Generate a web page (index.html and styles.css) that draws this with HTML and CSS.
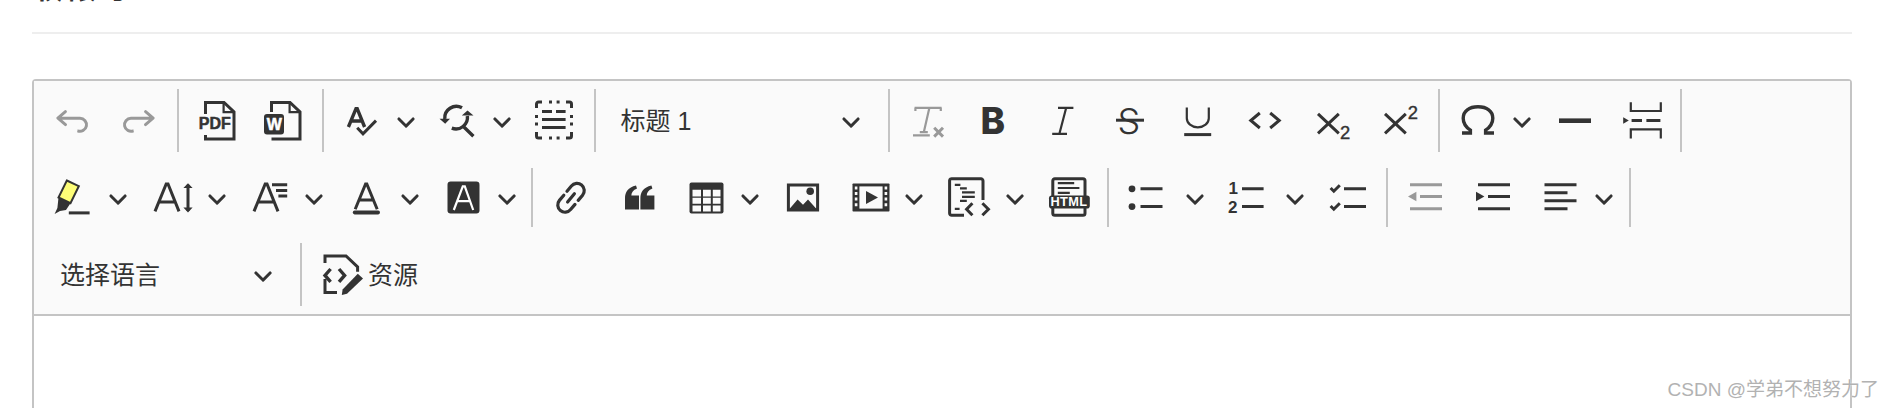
FILE: index.html
```html
<!DOCTYPE html>
<html lang="zh-CN">
<head>
    <meta charset="UTF-8">
    <title>编辑器</title>
    <link rel="stylesheet" href="styles.css">
</head>
<body>
    <div class="doc-title">权限号</div>
    <div class="divider"></div>

    <div class="editor">
        <div class="toolbar">
            <!-- row 1 -->
            <div class="row">
                <div class="btn off"><svg class="icon" viewBox="0 0 20 20"><path d="M5.042 9.367l2.189 1.837a.75.75 0 0 1-.965 1.149l-3.788-3.18a.747.747 0 0 1-.21-.284.75.75 0 0 1 .17-.945L6.23 4.762a.75.75 0 1 1 .964 1.15L4.863 7.866h8.917A.75.75 0 0 1 14 7.9a4 4 0 1 1-1.477 7.718l.344-1.489a2.5 2.5 0 1 0 1.094-4.73l.008-.032H5.042z"/></svg></div>
                <div class="btn off"><svg class="icon" viewBox="0 0 20 20"><path d="M14.958 9.367l-2.189 1.837a.75.75 0 0 0 .965 1.149l3.788-3.18a.747.747 0 0 0 .21-.284.75.75 0 0 0-.17-.945L13.77 4.762a.75.75 0 1 0-.964 1.15l2.331 1.955H6.22A.75.75 0 0 0 6 7.9a4 4 0 1 0 1.477 7.718l-.344-1.489A2.5 2.5 0 1 1 6.039 9.4l-.008-.032h8.927z"/></svg></div>
                <span class="sep"></span>
                <div class="btn btn-file"><svg class="icon" viewBox="0 0 20 20"><path class="ln" d="M3.75 6.5V.75H13L18 5.5V19H3.75V17"/><path class="ln thin" d="M12.8 1V5.6H18"/><text class="t-file" x="0.4" y="14.2">PDF</text></svg></div>
                <div class="btn btn-file"><svg class="icon" viewBox="0 0 20 20"><path class="ln" d="M3.75 5.5V.75H13L18 5.5V19H3.75"/><path class="ln thin" d="M12.8 1V5.6H18"/><rect x="0" y="6.5" width="10" height="10.25" rx="1.5"/><text class="t-file t-white" x="1.4" y="14.3">W</text></svg></div>
                <span class="sep"></span>
                <div class="btn drop"><svg class="icon" viewBox="0 0 20 20"><path class="ln bold" d="M3.2 13 7 3.8h.6L11.3 13M4.6 10h5.4"/><path class="ln" d="M7.6 13.4 10.5 16.4 17 9.8"/></svg><svg class="chev" viewBox="0 0 10 10"><path d="M.941 4.523a.75.75 0 1 1 1.06-1.06l3.006 3.005 3.005-3.005a.75.75 0 1 1 1.06 1.06l-3.549 3.55a.75.75 0 0 1-1.168-.136L.941 4.523z"/></svg></div>
                <div class="btn drop"><svg class="icon" viewBox="0 0 20 20"><path class="ln bold" d="M3.4 9A5.8 5.8 0 0 1 12 3.4M14.7 7.5A5.8 5.8 0 0 1 6.9 13.6M12.7 12.8 17.7 17.6"/><path d="M.75 8.9H6L3.6 11.4zM11.9 7.25h5.85L14.75 4.75z"/></svg><svg class="chev" viewBox="0 0 10 10"><path d="M.941 4.523a.75.75 0 1 1 1.06-1.06l3.006 3.005 3.005-3.005a.75.75 0 1 1 1.06 1.06l-3.549 3.55a.75.75 0 0 1-1.168-.136L.941 4.523z"/></svg></div>
                <div class="btn"><svg class="icon" viewBox="0 0 20 20"><path class="ln" d="M.75 3.5V1.5a1 1 0 0 1 1-1H3.5M15.5.5h1.75a1 1 0 0 1 1 1V3.5M18.25 15.5v2a1 1 0 0 1-1 1H15.5M3.5 18.5H1.75a1 1 0 0 1-1-1V15.5M7 .5h1.5M10.8.5h1.5M7 18.5h1.5M10.8 18.5h1.5M.75 7v1.5M.75 10.8v1.5M18.25 7v1.5M18.25 10.8v1.5M3.5 5.25h5M10.5 5.25h4.8M3.5 9.25h11.8M3.5 13.25h11.8"/></svg></div>
                <span class="sep"></span>
                <div class="select heading-select"><span>标题 1</span><svg class="chev" viewBox="0 0 10 10"><path d="M.941 4.523a.75.75 0 1 1 1.06-1.06l3.006 3.005 3.005-3.005a.75.75 0 1 1 1.06 1.06l-3.549 3.55a.75.75 0 0 1-1.168-.136L.941 4.523z"/></svg></div>
                <span class="sep"></span>
                <div class="btn btn-mark off"><svg class="icon" viewBox="0 0 20 20"><path class="ln thin" d="M2.8 3.4H16.3M3.2 3.4V5M15.9 3.4V5M10.2 3.4 7.4 15.6M5.4 15.6H9.4M2 17.2H10.4"/><path class="ln" d="M12.6 13.4l4.4 4.4M17 13.4l-4.4 4.4"/></svg></div>
                <div class="btn btn-mark"><svg class="icon" viewBox="0 0 20 20"><text class="t-bold" x="2.2" y="16.4">B</text></svg></div>
                <div class="btn btn-mark"><svg class="icon" viewBox="0 0 20 20"><path class="ln thin" d="M7.5 3.4H15.2M4.6 16.4H12M11.6 3.4 8.2 16.4"/></svg></div>
                <div class="btn btn-mark"><svg class="icon" viewBox="0 0 20 20"><text class="t-light" x="3.8" y="16.3">S</text><path class="ln" d="M3 9.6h14"/></svg></div>
                <div class="btn btn-mark"><svg class="icon" viewBox="0 0 20 20"><path class="ln thin" d="M4.9 3.2V8.6a5.5 4.6 0 0 0 11 0V3.2"/><path class="ln" d="M3.6 16.8H17.1"/></svg></div>
                <div class="btn btn-mark"><svg class="icon" viewBox="0 0 20 20"><path class="ln" d="M7.4 6 2.9 9.75l4.5 3.75M12.6 6l4.5 3.75-4.5 3.75"/></svg></div>
                <div class="btn btn-mark"><svg class="icon" viewBox="0 0 20 20"><path class="ln" d="M3 6.4 13.4 16.2M13.4 6.4 3 16.2"/><text class="t-small" x="14" y="18.8">2</text></svg></div>
                <div class="btn btn-mark"><svg class="icon" viewBox="0 0 20 20"><path class="ln" d="M3 6.4 13.4 16.2M13.4 6.4 3 16.2"/><text class="t-small" x="14.4" y="9.2">2</text></svg></div>
                <span class="sep"></span>
                <div class="btn drop"><svg class="icon" viewBox="0 0 20 20"><path class="ln bold" d="M2 16h4.2v-1.4C3.9 13 2.6 11 2.6 8.6 2.6 5 5.6 2.9 10 2.9s7.4 2.1 7.4 5.7c0 2.4-1.3 4.4-3.6 6V16H18"/></svg><svg class="chev" viewBox="0 0 10 10"><path d="M.941 4.523a.75.75 0 1 1 1.06-1.06l3.006 3.005 3.005-3.005a.75.75 0 1 1 1.06 1.06l-3.549 3.55a.75.75 0 0 1-1.168-.136L.941 4.523z"/></svg></div>
                <div class="btn"><svg class="icon" viewBox="0 0 20 20"><rect x="2" y="8.7" width="16" height="2.3"/></svg></div>
                <div class="btn"><svg class="icon" viewBox="0 0 20 20"><path class="ln thin" d="M4.4 .6V5H19.4V.6M4.4 18.8V14.2H19.4V18.8"/><path class="ln" d="M4.8 9.75H10M12.2 9.75H19.2"/><path d="M.6 8.1 3.4 9.75.6 11.4z"/></svg></div>
                <span class="sep"></span>
            </div>

            <!-- row 2 -->
            <div class="row row-mid">
                <div class="btn drop drop-wide"><svg class="icon" viewBox="0 0 20 20"><path class="hl" d="M7.9 1.25 13.9 4.1 9.75 12.6 3.75 9.75z"/><path d="M3.75 9.75 9.75 12.6 7.5 16 4.5 16.5 1.8 18 3.2 15z"/><rect x="8.9" y="16.7" width="10.4" height="1.5"/></svg><svg class="chev" viewBox="0 0 10 10"><path d="M.941 4.523a.75.75 0 1 1 1.06-1.06l3.006 3.005 3.005-3.005a.75.75 0 1 1 1.06 1.06l-3.549 3.55a.75.75 0 0 1-1.168-.136L.941 4.523z"/></svg></div>
                <div class="btn drop"><svg class="icon" viewBox="0 0 20 20"><path class="ln" d="M1 16.7 6.6 3h.9L13 16.7M2.8 12h8.5"/><path class="ln" d="M17.5 3.4V16.4"/><path d="M15.2 5 17.5 2.6 19.8 5zM15.2 14.8 17.5 17.2 19.8 14.8z"/></svg><svg class="chev" viewBox="0 0 10 10"><path d="M.941 4.523a.75.75 0 1 1 1.06-1.06l3.006 3.005 3.005-3.005a.75.75 0 1 1 1.06 1.06l-3.549 3.55a.75.75 0 0 1-1.168-.136L.941 4.523z"/></svg></div>
                <div class="btn drop"><svg class="icon" viewBox="0 0 20 20"><path class="ln" d="M2 16.7 7.6 3h.9L14 16.7M3.8 12h8.5M11 3.4h7.6M13 6.2h5.6M14.2 9h4.4"/></svg><svg class="chev" viewBox="0 0 10 10"><path d="M.941 4.523a.75.75 0 1 1 1.06-1.06l3.006 3.005 3.005-3.005a.75.75 0 1 1 1.06 1.06l-3.549 3.55a.75.75 0 0 1-1.168-.136L.941 4.523z"/></svg></div>
                <div class="btn drop"><svg class="icon" viewBox="0 0 20 20"><path class="ln" d="M4.6 15.6 9.8 3h.6L15.6 15.6M6.3 11h7.6"/><rect x="3.4" y="16.3" width="13.6" height="1.9" rx=".9"/></svg><svg class="chev" viewBox="0 0 10 10"><path d="M.941 4.523a.75.75 0 1 1 1.06-1.06l3.006 3.005 3.005-3.005a.75.75 0 1 1 1.06 1.06l-3.549 3.55a.75.75 0 0 1-1.168-.136L.941 4.523z"/></svg></div>
                <div class="btn drop"><svg class="icon" viewBox="0 0 20 20"><rect x="2.25" y="1.75" width="16" height="16" rx="1.6"/><path class="ln white" d="M5.4 16 9.9 4.2h1L15.1 16M6.8 11.6h7"/></svg><svg class="chev" viewBox="0 0 10 10"><path d="M.941 4.523a.75.75 0 1 1 1.06-1.06l3.006 3.005 3.005-3.005a.75.75 0 1 1 1.06 1.06l-3.549 3.55a.75.75 0 0 1-1.168-.136L.941 4.523z"/></svg></div>
                <span class="sep"></span>
                <div class="btn btn-shift btn-link"><svg class="icon" viewBox="0 0 20 20"><path class="ln round" d="M7 6.6 9.2 4A3.6 3.6 0 0 1 14.8 8.6L12.6 11.2M5.4 8.6 3.2 11.2A3.6 3.6 0 0 0 8.8 15.8L11 13.2M7.3 12 10.7 7.9"/></svg></div>
                <div class="btn"><svg class="icon" viewBox="0 0 20 20"><path d="M2.5 15.7V10C2.5 7 4 4.7 8 3.7L8.5 5.2C6.5 6 5.8 7.2 5.7 8.7H9.5V15.7Z"/><path d="M10.2 15.7V10C10.2 7 11.7 4.7 15.7 3.7L16.2 5.2C14.2 6 13.5 7.2 13.4 8.7H17.2V15.7Z"/></svg></div>
                <div class="btn drop"><svg class="icon" viewBox="0 0 20 20"><rect x="1.75" y="2.25" width="17" height="15.5" rx="1"/><path class="cells" d="M3.25 5.9h4.25v3.35H3.25zM8.5 5.9h3.9v3.35H8.5zM13.4 5.9h3.85v3.35H13.4zM3.25 9.9h4.25v3H3.25zM8.5 9.9h3.9v3H8.5zM13.4 9.9h3.85v3H13.4zM3.25 13.75h4.25v3H3.25zM8.5 13.75h3.9v3H8.5zM13.4 13.75h3.85v3H13.4z"/></svg><svg class="chev" viewBox="0 0 10 10"><path d="M.941 4.523a.75.75 0 1 1 1.06-1.06l3.006 3.005 3.005-3.005a.75.75 0 1 1 1.06 1.06l-3.549 3.55a.75.75 0 0 1-1.168-.136L.941 4.523z"/></svg></div>
                <div class="btn"><svg class="icon" viewBox="0 0 20 20"><path class="ln" d="M2.7 3.5H17.3V16H2.7z"/><path d="M3 15.8 7.3 10.8 10 13.4 12.5 10.8 17 15.8z"/><circle cx="13.6" cy="6.6" r="1.9"/></svg></div>
                <div class="btn drop drop-media"><svg class="icon" viewBox="0 0 20 20"><rect x="1.25" y="2.75" width="18.5" height="14" rx=".4"/><path class="cells" d="M4.7 4.2H16.3V15.3H4.7z"/><path d="M8 6.5 14 9.75 8 13z"/><path class="cells" d="M2.4 4.2h1.3v1.5H2.4zM2.4 7h1.3v1.5H2.4zM2.4 9.8h1.3v1.5H2.4zM2.4 12.6h1.3v1.5H2.4zM17.3 4.2h1.3v1.5h-1.3zM17.3 7h1.3v1.5h-1.3zM17.3 9.8h1.3v1.5h-1.3zM17.3 12.6h1.3v1.5h-1.3z"/></svg><svg class="chev" viewBox="0 0 10 10"><path d="M.941 4.523a.75.75 0 1 1 1.06-1.06l3.006 3.005 3.005-3.005a.75.75 0 1 1 1.06 1.06l-3.549 3.55a.75.75 0 0 1-1.168-.136L.941 4.523z"/></svg></div>
                <div class="btn drop drop-wide drop-snippet"><svg class="icon" viewBox="0 0 20 20"><path class="ln" d="M8 18.6H2a1 1 0 0 1-1.2-1V1.2A1 1 0 0 1 2 .4H16.4a1 1 0 0 1 1.1 1V11"/><path class="ln thin" d="M3.4 3.4h2.8M6 5.2h3.4M7 7.2h6.4M7 9.4h6.4M6 11.4h3.4M3.4 15.4h2.4"/><path class="ln" d="M12.2 12.6 9.3 15.6l2.9 3M17.2 12.6l3 3-3 3"/></svg><svg class="chev" viewBox="0 0 10 10"><path d="M.941 4.523a.75.75 0 1 1 1.06-1.06l3.006 3.005 3.005-3.005a.75.75 0 1 1 1.06 1.06l-3.549 3.55a.75.75 0 0 1-1.168-.136L.941 4.523z"/></svg></div>
                <div class="btn"><svg class="icon" viewBox="0 0 20 20"><path class="ln" d="M1.9 9V1.4a1 1 0 0 1 1-1H17a1 1 0 0 1 1 1V9M1.9 15v2.6a1 1 0 0 0 1 1H17a1 1 0 0 0 1-1V15"/><path class="ln thin" d="M4.4 2.6h8.2M4.4 5h10.8M4.4 7.4h6"/><rect x="0" y="8.7" width="20.4" height="6.6" rx="1.4"/><text class="t-html" x="0.7" y="14.1">HTML</text></svg></div>
                <span class="sep"></span>
                <div class="btn drop drop-list"><svg class="icon" viewBox="0 0 20 20"><circle cx="3" cy="5.4" r="1.7"/><circle cx="3" cy="14.3" r="1.7"/><path class="ln" d="M7.25 5.4h11M7.25 14.3h11"/></svg><svg class="chev" viewBox="0 0 10 10"><path d="M.941 4.523a.75.75 0 1 1 1.06-1.06l3.006 3.005 3.005-3.005a.75.75 0 1 1 1.06 1.06l-3.549 3.55a.75.75 0 0 1-1.168-.136L.941 4.523z"/></svg></div>
                <div class="btn drop drop-list"><svg class="icon" viewBox="0 0 20 20"><text class="t-num" x="1.2" y="8">1</text><text class="t-num" x="1" y="17.4">2</text><path class="ln" d="M8 5.4h10.8M8 14.3h10.8"/></svg><svg class="chev" viewBox="0 0 10 10"><path d="M.941 4.523a.75.75 0 1 1 1.06-1.06l3.006 3.005 3.005-3.005a.75.75 0 1 1 1.06 1.06l-3.549 3.55a.75.75 0 0 1-1.168-.136L.941 4.523z"/></svg></div>
                <div class="btn btn-shift"><svg class="icon" viewBox="0 0 20 20"><path class="ln" d="M.8 5 2.4 6.6 5.4 3.6M.8 14 2.4 15.6 5.4 12.6M7.5 5.4h11M7.5 14.3h11"/></svg></div>
                <span class="sep"></span>
                <div class="btn btn-shift off"><svg class="icon" viewBox="0 0 20 20"><path class="ln" d="M1 3.4h16M6 9.25h11M1 15.4h16"/><path d="M4.2 6.9V11.6L0 9.25z"/></svg></div>
                <div class="btn btn-shift"><svg class="icon" viewBox="0 0 20 20"><path class="ln" d="M1.5 3.4h16M6.5 9.25h11M1.5 15.4h16"/><path d="M.5 6.9V11.6L4.7 9.25z"/></svg></div>
                <div class="btn drop drop-align"><svg class="icon" viewBox="0 0 20 20"><path class="ln" d="M1.75 3.4h16M1.75 7.4h11.5M1.75 11.4h16M1.75 15.4h11.5"/></svg><svg class="chev" viewBox="0 0 10 10"><path d="M.941 4.523a.75.75 0 1 1 1.06-1.06l3.006 3.005 3.005-3.005a.75.75 0 1 1 1.06 1.06l-3.549 3.55a.75.75 0 0 1-1.168-.136L.941 4.523z"/></svg></div>
                <span class="sep"></span>
            </div>

            <!-- row 3 -->
            <div class="row">
                <div class="select lang-select"><span>选择语言</span><svg class="chev" viewBox="0 0 10 10"><path d="M.941 4.523a.75.75 0 1 1 1.06-1.06l3.006 3.005 3.005-3.005a.75.75 0 1 1 1.06 1.06l-3.549 3.55a.75.75 0 0 1-1.168-.136L.941 4.523z"/></svg></div>
                <span class="sep"></span>
                <div class="source-btn"><svg class="icon" viewBox="0 0 20 20"><path class="ln" d="M1 4V.5H11.5L17.3 6V8.4M1 12V18.8H7"/><path class="ln bold" d="M3.8 7 1 10.2l2.8 3.2M8 7l2.8 3.2L8 13.4"/><path d="M17.4 9.4 20 11.8 12 19.4 9.4 20 9.8 17.2z"/></svg><span>资源</span></div>
            </div>
        </div>
        <div class="content"></div>
    </div>

    <div class="watermark">CSDN @学弟不想努力了</div>
</body>
</html>
```

FILE: styles.css
```css
* {
    margin: 0;
    padding: 0;
    box-sizing: border-box;
}

html, body {
    height: 100%;
    overflow: hidden;
}

body {
    position: relative;
    padding: 0 40px 0 32px;
    background: #fff;
    color: #333;
    font-family: "Liberation Sans", "Noto Sans CJK SC", sans-serif;
}

.doc-title {
    display: flex;
    align-items: flex-end;
    height: 3px;
    overflow: hidden;
    margin-bottom: 29px;
    padding-left: 3px;
    font-size: 28px;
    font-weight: 700;
    line-height: 26px;
    letter-spacing: 5px;
}

.divider {
    height: 2px;
    margin-bottom: 45px;
    background: #eee;
}

.editor {
    height: 400px;
    border: 2px solid #c4c4c4;
    border-radius: 4px;
}

.toolbar {
    display: flex;
    flex-direction: column;
    gap: 14px;
    padding: 8px 0 8px 4px;
    background: #fafafa;
    border-bottom: 2px solid #c4c4c4;
}

.row {
    display: flex;
    align-items: center;
    height: 63px;
}

.sep {
    flex: none;
    width: 2px;
    height: 63px;
    margin: 0 5px;
    background: #c4c4c4;
}

.row-mid .sep {
    height: 59px;
}

.btn {
    flex: none;
    display: flex;
    align-items: center;
    width: 67px;
    padding-left: 13.5px;
}

.btn-file {
    width: 66.3px;
}

.btn-mark {
    width: 67.2px;
}

.btn-shift {
    padding-left: 14.5px;
}

.btn-link {
    width: 68px;
}

.drop {
    width: 96.5px;
    padding-left: 13px;
}

.drop .chev {
    margin-left: 14px;
}

.drop-wide {
    width: 102px;
}

.drop-wide .chev {
    margin-left: 16.5px;
}

.drop-media {
    width: 98.5px;
}

.drop-snippet {
    width: 100px;
}

.drop-list {
    width: 100px;
    padding-left: 12px;
}

.drop-list .chev {
    margin-left: 18.5px;
}

.drop-align {
    padding-left: 14px;
}

.drop-align .chev {
    margin-left: 13px;
}

.icon {
    flex: none;
    width: 40px;
    height: 40px;
    overflow: visible;
    color: #333;
    fill: currentColor;
}

.off .icon {
    color: #999;
}

.chev {
    flex: none;
    width: 20px;
    height: 20px;
    fill: #333;
}

.ln {
    fill: none;
    stroke: currentColor;
    stroke-width: 1.5;
}

.thin {
    stroke-width: 1.1;
}

.bold {
    stroke-width: 1.7;
}

.round {
    stroke-linecap: round;
    stroke-width: 1.6;
}

.white {
    stroke: #fff;
    stroke-width: 1.1;
}

.cells {
    fill: #fafafa;
}

.hl {
    fill: #fdfd77;
    stroke: #333;
    stroke-width: 1;
}

.select {
    flex: none;
    display: flex;
    align-items: center;
    justify-content: space-between;
    font-size: 25px;
}

.select span,
.source-btn span {
    margin-bottom: 3px;
}

.heading-select {
    width: 282.6px;
    padding: 0 22px 0 20px;
}

.lang-select {
    width: 257px;
    padding: 0 22px 0 22px;
}

.source-btn {
    display: flex;
    align-items: center;
    gap: 5px;
    padding-left: 16px;
    font-size: 25px;
}

.content {
    height: 300px;
    background: #fff;
}

/* letters inside icons */
.t-file {
    font-family: "Liberation Sans", sans-serif;
    font-size: 8px;
    font-weight: 700;
    stroke: currentColor;
    stroke-width: .25;
}

.t-white {
    fill: #fff;
    stroke: #fff;
}

.t-bold {
    font-family: "Inter", sans-serif;
    font-size: 18.5px;
    font-weight: 800;
}

.t-light {
    font-family: "Inter", sans-serif;
    font-size: 18px;
    font-weight: 300;
}

.t-small {
    font-family: "Liberation Sans", sans-serif;
    font-size: 9.2px;
    stroke: currentColor;
    stroke-width: .2;
}

.t-num {
    font-family: "Liberation Sans", sans-serif;
    font-size: 8.5px;
    font-weight: 700;
}

.t-html {
    fill: #fff;
    font-family: "Liberation Sans", sans-serif;
    font-size: 6.4px;
    font-weight: 700;
    letter-spacing: .2px;
}

.watermark {
    position: absolute;
    right: 13px;
    bottom: 7px;
    color: #b2b2b2;
    font-size: 19px;
    white-space: nowrap;
    text-shadow: 0 0 2px #fff;
}
```
